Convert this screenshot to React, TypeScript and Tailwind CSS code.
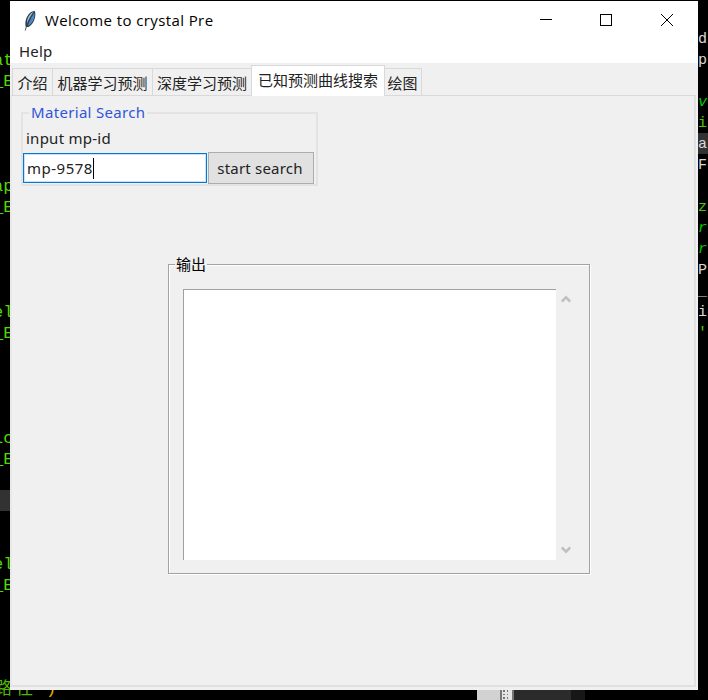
import type { ReactNode } from 'react';

const uiFont = "font-['Noto_Sans','Noto_Sans_CJK_SC',sans-serif]";
const codeFont = "font-['Liberation_Mono','Noto_Sans_CJK_SC',monospace]";

const leftCode: Record<number, string> = {
  2: 'at', 3: '_E', 8: 'ap', 9: '_E', 14: 'el', 15: '_E', 20: 'ic', 21: '_E', 26: 'el', 27: '_E',
};

const rightCode: Record<number, { text: string; tone: string }> = {
  1: { text: 'd', tone: 'text-[#d8d8d8]' },
  2: { text: 'p', tone: 'text-[#d8d8d8]' },
  4: { text: 'v', tone: 'text-[#00c800] italic' },
  5: { text: 'i', tone: 'text-[#4fc800]' },
  6: { text: 'a', tone: 'text-[#d8d8d8]' },
  7: { text: 'F', tone: 'text-[#d8d8d8]' },
  9: { text: 'zh', tone: 'text-[#4fc800]' },
  10: { text: 'r', tone: 'text-[#00c800] italic' },
  11: { text: 'r', tone: 'text-[#00c800] italic' },
  12: { text: 'P', tone: 'text-[#d8d8d8]' },
  13: { text: '_', tone: 'text-[#d8d8d8]' },
  14: { text: 'ip', tone: 'text-[#d8d8d8]' },
  15: { text: "'", tone: 'text-[#4fc800]' },
};

const rows = Array.from({ length: 32 }, (_, i) => i);

function Editor() {
  return (
    <div className={`h-full w-full pt-[7px] text-[17px] ${codeFont}`}>
      <div className="flex h-[672px] justify-between">
        <div className="w-[10px]">
          {rows.map((k) => (
            <div key={k} className={`h-[21px] whitespace-pre leading-[23px] text-[#4fd800] ${k === 23 ? 'bg-[#323232]' : ''}`}>
              <span className="-ml-[7px]">{leftCode[k] ?? ''}</span>
            </div>
          ))}
        </div>
        <div className="w-[10px]">
          {rows.map((k) => (
            <div key={k} className={`h-[21px] whitespace-pre text-[15px] leading-[23px] ${rightCode[k]?.tone ?? ''} ${k === 6 ? 'bg-[#323232]' : ''}`}>
              {rightCode[k]?.text ?? ''}
            </div>
          ))}
        </div>
      </div>
      <div className="flex h-[21px]">
        <div className="-ml-[5px] w-[482px] whitespace-pre leading-[21px] text-[#4fb800]">
          <span className="tracking-[4px]">路径</span>
          <span className="ml-[9px] text-[#e8b000]">)</span>
        </div>
        <div className="w-[23px] bg-[#d2d2d2]" />
        <div className="flex w-[14px] flex-wrap content-start gap-[2px] border-x-2 border-[#777] bg-[#e4e4e4] px-px pt-[11px]">
          {rows.slice(0, 9).map((i) => (
            <span key={i} className="size-[1.5px] bg-[#777]" />
          ))}
        </div>
        <div className="w-[57px] bg-[#2b2b2b]" />
        <div className="w-[14px] bg-[#171717]" />
      </div>
    </div>
  );
}

function Feather() {
  return (
    <svg width="14" height="22" viewBox="0 0 14 22">
      <path d="M11.800 1C8 1 4.800 4.500 3.300 8.500C2.200 11.500 2 14.500 2.800 17L5.500 17C9.500 15 12.800 9 12.300 3Z" fill="#2a3b49" />
      <path d="M10.500 1.800C7.500 3 5.200 6.500 4.200 10L3.800 14.500C5 10.500 7.500 6 10.500 1.800Z" fill="#9cc4e6" />
      <path d="M11.500 2.500C8.500 6.500 6.300 11 4.800 16C9 14 12 9 11.500 2.500Z" fill="#4c88c4" />
      <path d="M10 4C6.500 9 4 14 2.200 20.500" stroke="#3b444c" strokeWidth="0.900" fill="none" />
    </svg>
  );
}

function TitleBar() {
  return (
    <div className="flex h-[39px] items-center bg-white pl-[13px]">
      <Feather />
      <span className="ml-[8px] w-[180px] whitespace-nowrap font-['Open_Sans',sans-serif] text-[15px] tracking-[0.4px] text-black">Welcome to crystal Pre</span>
      <svg className="-mt-px ml-auto mr-[24px]" width="134" height="14" viewBox="0 0 134 14" fill="none" stroke="#000" shapeRendering="crispEdges">
        <path d="M0 6.500H12" />
        <rect x="60.500" y="1.500" width="11" height="11" />
        <path d="M121 1L133 13M133 1L121 13" shapeRendering="auto" />
      </svg>
    </div>
  );
}

function Tab({ width, children }: { width: string; children: ReactNode }) {
  return (
    <div className={`flex h-[28px] items-center justify-center border-l border-t border-[#d9d9d9] bg-[#f0f0f0] pt-px ${width}`}>
      <span className="whitespace-nowrap">{children}</span>
    </div>
  );
}

function Chevron({ up }: { up?: boolean }) {
  return (
    <svg width="10" height="8" viewBox="0 0 10 8" fill="none" stroke="#c0c0c0" strokeWidth="2.600">
      <path d={up ? 'M0.800 6.500L5 2.300L9.200 6.500' : 'M0.800 1.500L5 5.700L9.200 1.500'} />
    </svg>
  );
}

function SearchPanel() {
  return (
    <div className="ml-[9px] h-[82px] w-[297px] pt-[9px]">
      <div className="relative h-[74px] border-2 border-[#e3e3e3] pt-[13px]">
        <span className="absolute -top-[13px] left-[6px] whitespace-nowrap bg-[#f0f0f0] px-[2px] leading-[22px] tracking-[0.32px] text-[#2f55dd]">Material Search</span>
        <label className="ml-[3px] block h-[25px] whitespace-nowrap leading-[22px] tracking-[0.25px]">input mp-id</label>
        <div className="flex items-center gap-px">
          <div className="flex h-[30px] w-[184px] items-center border border-[#0078d7] bg-white pl-[3px] shadow-[inset_0_0_0_1px_#c9e2f7]">
            <span className="whitespace-nowrap tracking-[0.5px]">mp-9578</span>
            <span className="h-[21px] w-px bg-black" />
          </div>
          <div className="flex h-[32px] w-[106px] items-center justify-center border-[1.500px] border-[#adadad] bg-[#e1e1e1] pr-[2px]">
            <span className="whitespace-nowrap tracking-[0.2px]">start search</span>
          </div>
        </div>
      </div>
    </div>
  );
}

function OutputPanel() {
  return (
    <div className="relative ml-[156px] mt-[79px] flex h-[310px] w-[422px] border border-[#a3a3a3] pl-[14px] pt-[24px] shadow-[inset_1px_1px_0_#fff,1px_1px_0_#fff]">
      <span className="absolute -top-[12px] left-[6px] whitespace-nowrap bg-[#f0f0f0] px-px leading-[22px] text-black">输出</span>
      <div className="h-[271px] w-[373px] border-l border-t border-[#a0a0a0] bg-white" />
      <div className="flex h-[271px] w-[20px] flex-col items-center justify-between py-[6px]">
        <Chevron up />
        <Chevron />
      </div>
    </div>
  );
}

export default function App() {
  return (
    <div className="relative h-[700px] w-[708px] overflow-hidden bg-black">
      <Editor />
      <div className={`absolute left-[10px] top-px flex h-[689px] w-[688px] flex-col bg-[#f0f0f0] text-[15px] text-[#222] ${uiFont}`}>
        <TitleBar />
        <div className="flex h-[23px] shrink-0 items-center bg-white pl-[9px] leading-[23px] tracking-[0.2px]">Help</div>
        <div className="flex h-[33px] shrink-0 items-end pl-[2px]">
          <Tab width="w-[40px]">介绍</Tab>
          <Tab width="w-[100px]">机器学习预测</Tab>
          <Tab width="w-[99px]">深度学习预测</Tab>
          <div className="z-10 flex h-[31px] w-[134px] items-center justify-center border border-b-0 border-[#d9d9d9] bg-white pb-px">
            <span className="whitespace-nowrap">已知预测曲线搜索</span>
          </div>
          <div className="flex h-[28px] w-[37px] items-center justify-center border-r border-t border-[#d9d9d9] pr-px pt-px">
            <span className="whitespace-nowrap">绘图</span>
          </div>
        </div>
        <div className="-mt-px mr-[2px] h-[592px] border-2 border-t border-[#e0e0e0] border-l-[#e9e9e9] border-t-[#d9d9d9] pt-[7px]">
          <SearchPanel />
          <OutputPanel />
        </div>
      </div>
    </div>
  );
}
